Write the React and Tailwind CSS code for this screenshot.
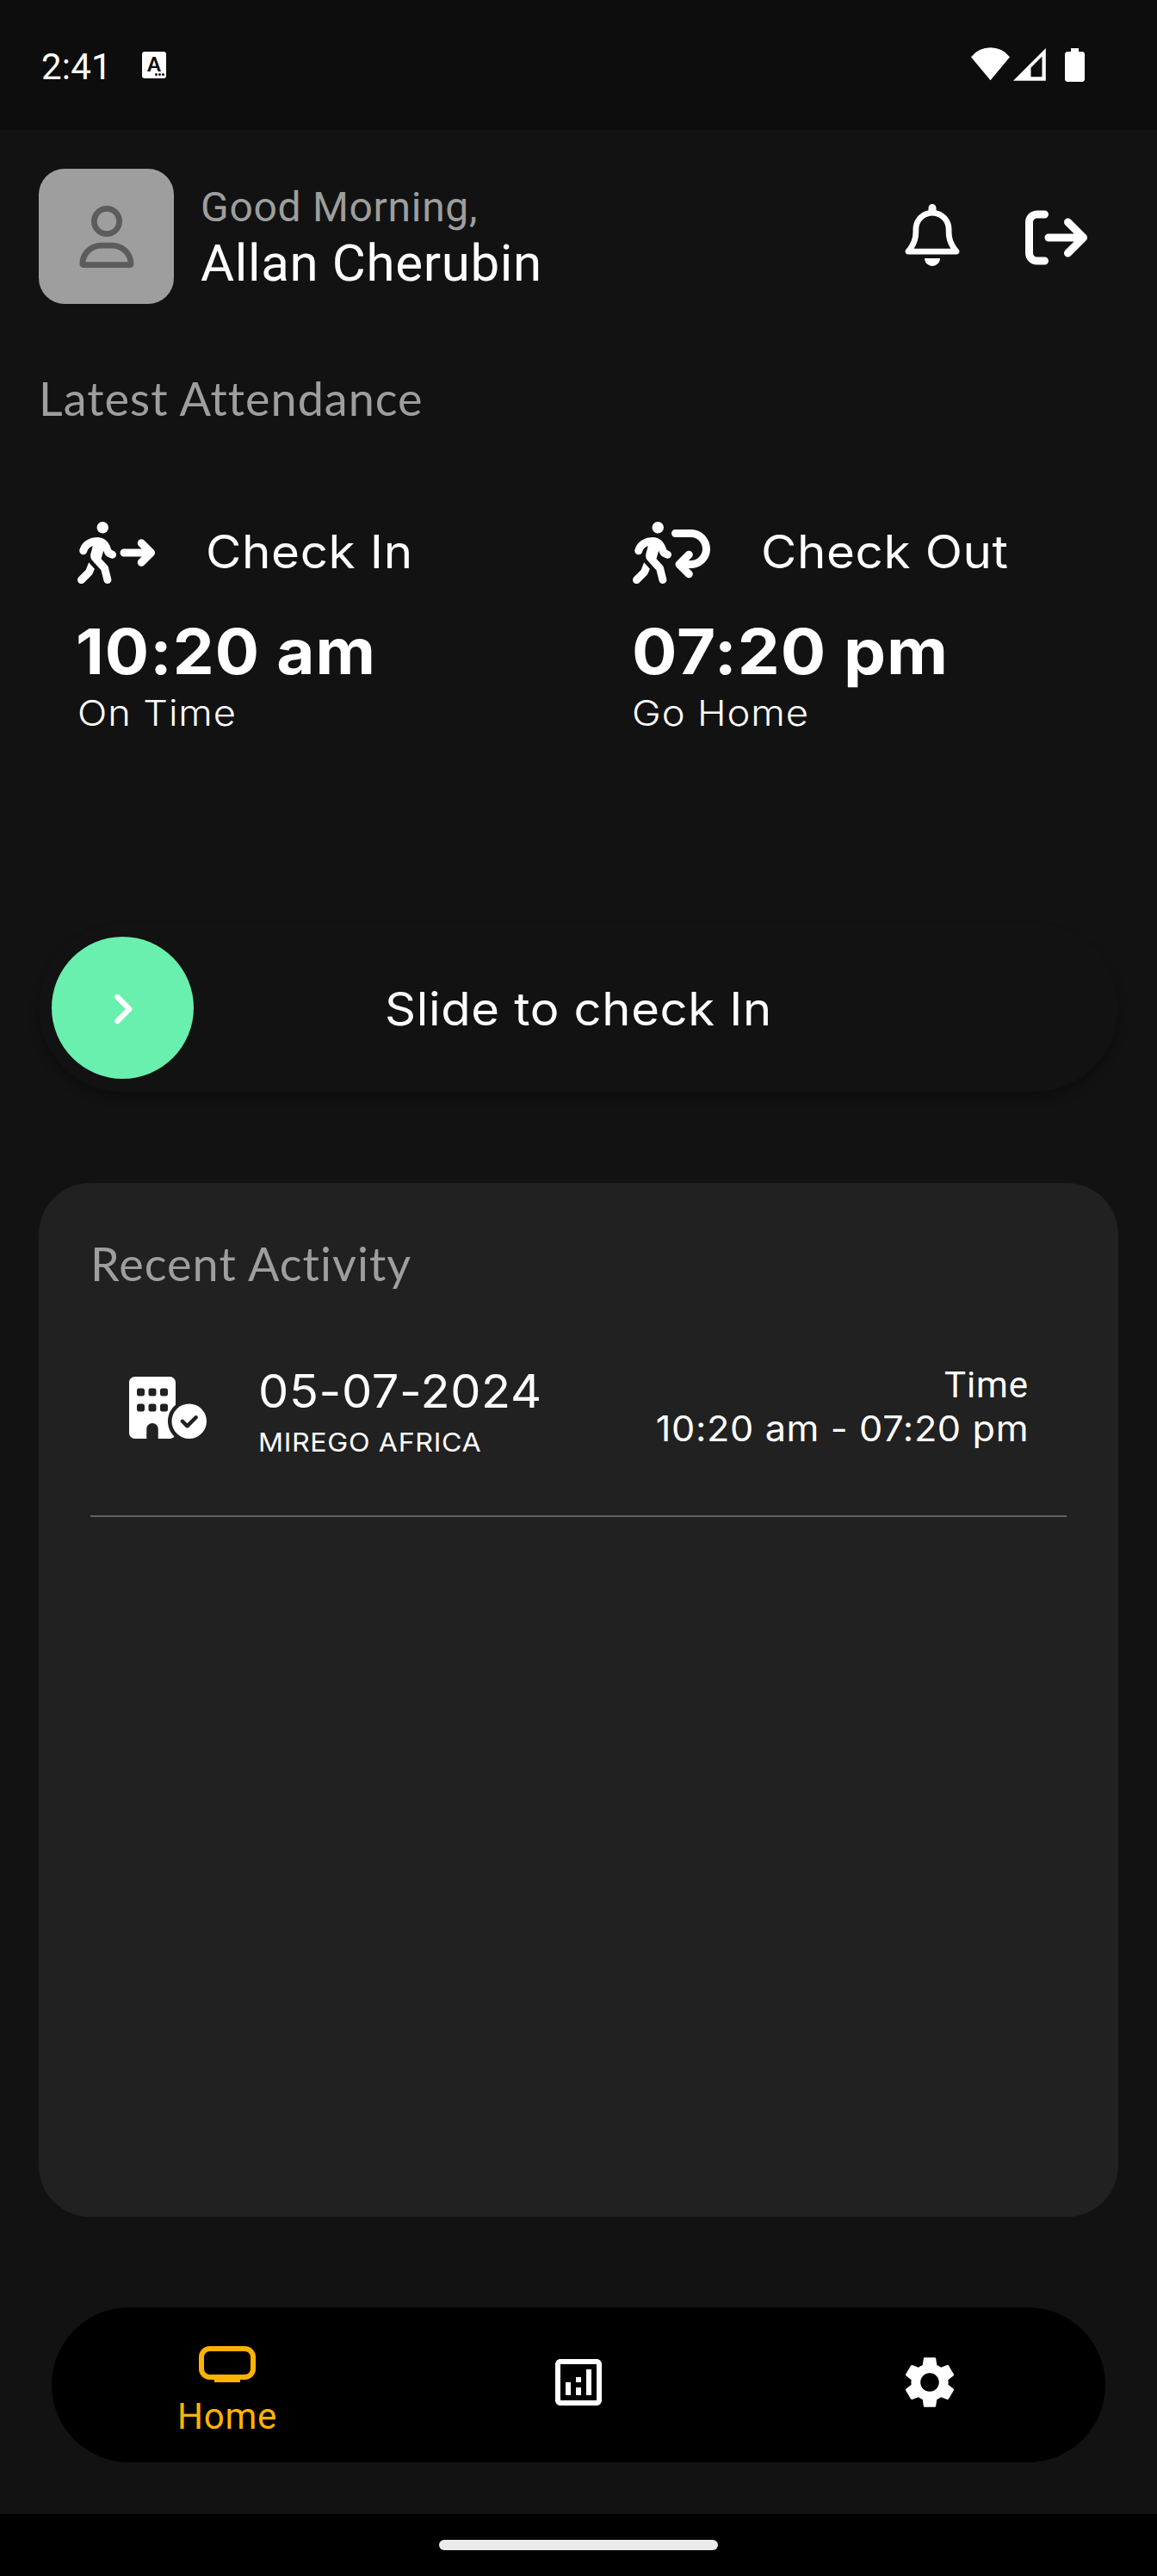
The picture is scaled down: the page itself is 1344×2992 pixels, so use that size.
import React from "react";
import {
  FaRegUser,
  FaRegBell,
  FaArrowRightFromBracket,
  FaPersonWalkingArrowRight,
  FaPersonWalkingArrowLoopLeft,
  FaBuildingCircleCheck,
} from "react-icons/fa6";
import { MdOutlineAnalytics, MdSettings } from "react-icons/md";

function StatusBar() {
  return (
    <div className="flex h-[151px] shrink-0 items-start bg-[#0d0d0d] pl-[48px] pr-[84px] font-['Roboto',sans-serif]">
      <div className="mt-[53px] w-[117px] text-[42px] leading-[50px] tracking-[0.2px]">2:41</div>
      <div className="mt-[60px] flex h-[31px] w-[28px] flex-col items-center rounded-[3px] bg-white">
        <span className="mt-[4px] h-[21px] font-['Lato',sans-serif] text-[22px] font-black leading-[22px] text-[#0d0d0d]">
          A
        </span>
        <span className="flex gap-[1px] self-end pr-[2px]">
          <i className="size-[3px] rounded-full bg-[#0d0d0d]" />
          <i className="size-[3px] rounded-full bg-[#0d0d0d]" />
          <i className="size-[3px] rounded-full bg-[#0d0d0d]" />
        </span>
      </div>
      <div className="ml-auto mt-[54px] flex">
        <svg className="h-[42px] w-[46px]" viewBox="0 0 46 42" fill="#fff">
          <path d="M0 12.2A28.5 28.5 0 0 1 45 12.2L22.5 39.3Z" />
        </svg>
        <svg className="ml-[3px] h-[42px] w-[39px]" viewBox="0 0 39 42" fill="#fff" fillRule="evenodd">
          <path d="M0 39.8L37.8 2V39.8ZM20.5 35.3H33.5V11.5L20.5 24.5Z" />
        </svg>
        <svg className="ml-[20px] h-[42px] w-[24px]" viewBox="0 0 24 42" fill="#fff">
          <path d="M8 2H17V6H22L24 8V39L22 41H3L1 39V8L3 6H8Z" />
        </svg>
      </div>
    </div>
  );
}

function Header() {
  return (
    <div className="flex h-[157px] items-start pl-[45px] pr-[81px] font-['Roboto',sans-serif]">
      <div className="flex size-[157px] items-center justify-center rounded-[30px] bg-[#9e9e9e]">
        <FaRegUser className="size-[72px] text-[#5c5c5c]" />
      </div>
      <div className="ml-[31px] mt-[17px]">
        <div className="text-[48px] leading-[56px] tracking-[0.7px] text-[#9e9e9e]">Good Morning,</div>
        <div className="mt-[2px] text-[60px] leading-[70px] tracking-[0.65px]">Allan Cherubin</div>
      </div>
      <FaRegBell className="ml-auto mt-[41px] size-[72px]" />
      <FaArrowRightFromBracket className="ml-[72px] mt-[44px] size-[72px]" />
    </div>
  );
}

function Attendance({ icon, title, titleClass, time, timeClass, note, noteClass }) {
  return (
    <div className="w-[645px] shrink-0">
      <div className="flex h-[72px] items-start">
        {icon}
        <div className={titleClass}>{title}</div>
      </div>
      <div className={timeClass}>{time}</div>
      <div className={noteClass}>{note}</div>
    </div>
  );
}

function Slider() {
  return (
    <div className="relative mx-[45px] mt-[220px] flex h-[195px] items-center justify-center rounded-full bg-[#121212] shadow-[0_8px_12px_rgba(0,0,0,0.25)]">
      <div className="absolute left-[15px] top-[15px] size-[165px] rounded-full bg-[#69f0ae]">
        <svg className="size-[165px]" viewBox="0 0 165 165" fill="none" stroke="#fff" strokeWidth="6.2" strokeLinecap="round" strokeLinejoin="round">
          <path d="M76.4 70L90.3 84L76.4 98" />
        </svg>
      </div>
      <div className="scale-x-[1.061] pt-[2px] text-[53px] leading-[70px] tracking-[0.6px]">Slide to check In</div>
    </div>
  );
}

function RecentActivity() {
  return (
    <div className="mx-[45px] mt-[106px] h-[1201px] rounded-[60px] bg-[#212121] px-[60px] pt-[62px]">
      <div className="font-['Lato',sans-serif] text-[54px] leading-[64px] tracking-[1.05px] text-[#9e9e9e]">
        Recent Activity
      </div>
      <div className="mt-[81px] flex h-[181px] items-start border-b-2 border-[#616161] pl-[45px] pr-[44px]">
        <FaBuildingCircleCheck className="mt-[18px] h-[72px] w-[90px]" />
        <div className="ml-[60px]">
          <div className="origin-left scale-x-[1.055] text-[53px] leading-[70px] tracking-[0.6px]">05-07-2024</div>
          <div className="mt-[4px] origin-left scale-x-[1.072] text-[30px] leading-[40px] tracking-[0.6px]">MIREGO AFRICA</div>
        </div>
        <div className="ml-auto mt-[3px] text-right">
          <div className="font-['Roboto',sans-serif] text-[42px] leading-[50px] tracking-[0.9px]">Time</div>
          <div className="origin-right scale-x-[1.054] text-[41px] leading-[50px] tracking-[0.6px]">10:20 am - 07:20 pm</div>
        </div>
      </div>
    </div>
  );
}

function BottomNav() {
  return (
    <div className="mx-[60px] mt-[105px] grid h-[180px] grid-cols-3 rounded-full bg-black">
      <div className="flex flex-col items-center pt-[45px] text-[#ffb300]">
        <svg className="h-[42px] w-[66px]" viewBox="0 0 66 42">
          <rect x="3" y="3" width="60" height="33" rx="9.5" fill="none" stroke="currentColor" strokeWidth="6" />
          <rect x="18" y="38" width="30" height="4" fill="currentColor" />
        </svg>
        <div className="mt-[15px] font-['Roboto',sans-serif] text-[42px] leading-[50px] tracking-[0.75px]">Home</div>
      </div>
      <div className="flex justify-center pt-[51px]">
        <MdOutlineAnalytics className="size-[72px]" />
      </div>
      <div className="flex justify-center pt-[51px]">
        <MdSettings className="size-[72px]" />
      </div>
    </div>
  );
}

export default function App() {
  return (
    <div className="flex h-[2992px] w-[1344px] flex-col overflow-hidden bg-[#121212] font-['Inter',sans-serif] text-white">
      <StatusBar />
      <main className="h-[2769px] shrink-0 pt-[45px]">
        <Header />
        <div className="ml-[45px] mt-[78px] font-['Lato',sans-serif] text-[54px] leading-[64px] tracking-[0.98px] text-[#9e9e9e]">
          Latest Attendance
        </div>
        <div className="mt-[111px] flex pl-[90px]">
          <Attendance
            icon={<FaPersonWalkingArrowRight className="h-[72px] w-[90px]" />}
            title="Check In"
            titleClass="ml-[59px] origin-left scale-x-[1.067] text-[53px] leading-[70px] tracking-[0.6px]"
            time="10:20 am"
            timeClass="-ml-[2px] mt-[34px] origin-left scale-x-[1.043] text-[73px] font-bold leading-[90px] tracking-[1px]"
            note="On Time"
            noteClass="mt-[1px] origin-left scale-x-[1.103] text-[41px] font-light leading-[50px] tracking-[0.8px]"
          />
          <Attendance
            icon={<FaPersonWalkingArrowLoopLeft className="h-[72px] w-[90px]" />}
            title="Check Out"
            titleClass="ml-[59px] origin-left scale-x-[1.066] text-[53px] leading-[70px] tracking-[0.6px]"
            time="07:20 pm"
            timeClass="-ml-[1px] mt-[34px] origin-left scale-x-[1.066] text-[73px] font-bold leading-[90px] tracking-[1px]"
            note="Go Home"
            noteClass="-ml-[1px] mt-[1px] origin-left scale-x-[1.107] text-[41px] font-light leading-[50px] tracking-[0.8px]"
          />
        </div>
        <Slider />
        <RecentActivity />
        <BottomNav />
      </main>
      <div className="flex h-[72px] justify-center bg-black pt-[30px]">
        <div className="h-[12px] w-[324px] rounded-full bg-[#ebebeb]" />
      </div>
    </div>
  );
}
